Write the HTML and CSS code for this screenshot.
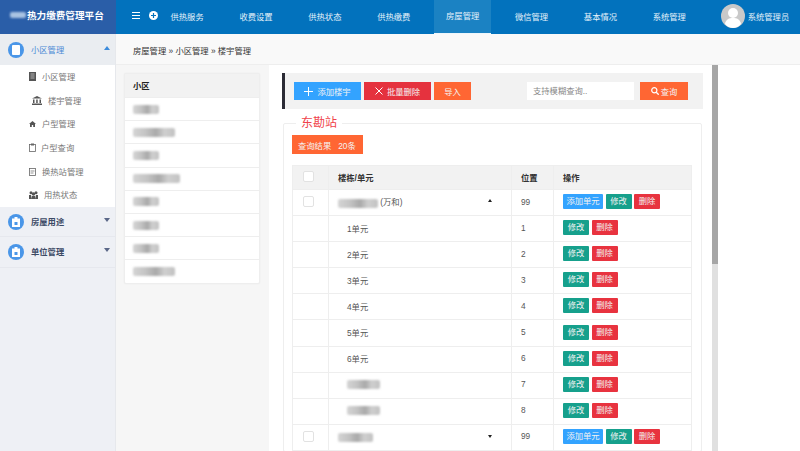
FILE: index.html
```html
<!DOCTYPE html>
<html lang="zh-CN">
<head>
    <meta charset="UTF-8">
    <title>热力缴费管理平台</title>
    <link rel="stylesheet" href="styles.css">
</head>
<body>
    <header class="topbar">
        <div class="logo"><span class="mask mask-logo"></span>热力缴费管理平台</div>
        <div class="tools">
            <svg width="8" height="7" viewBox="0 0 8 7"><path d="M0 .5h8M0 3.5h8M0 6.5h8" stroke="#fff" stroke-width="1.2"/></svg>
            <svg width="9" height="9" viewBox="0 0 9 9"><circle cx="4.500" cy="4.500" r="4.500" fill="#fff"/><path d="M4.500 2v5M2 4.500h5" stroke="#0272bd" stroke-width="1.2"/></svg>
        </div>
        <nav class="nav">
            <a>供热服务</a>
            <a>收费设置</a>
            <a>供热状态</a>
            <a>供热缴费</a>
            <a class="active">房屋管理</a>
            <a>微信管理</a>
            <a>基本情况</a>
            <a>系统管理</a>
        </nav>
        <div class="user">
            <svg width="24" height="24" viewBox="0 0 24 24"><circle cx="12" cy="12" r="12" fill="#c9c9c9"/><circle cx="12" cy="9" r="5" fill="#fff"/><path d="M4 20c1-5 4-6 8-6s7 1 8 6c-2 2.500-5 4-8 4s-6-1.500-8-4z" fill="#fff"/></svg>
            <span>系统管理员</span>
        </div>
    </header>

    <div class="layout">
        <aside class="sidebar">
            <div class="menu-head open">
                <span class="menu-icon"><svg width="8" height="10" viewBox="0 0 8 10"><rect width="8" height="10" rx="1" fill="#fff"/></svg></span>
                <span class="menu-text">小区管理</span>
                <i class="caret caret-up"></i>
            </div>
            <ul class="submenu">
                <li class="s1"><svg width="7" height="9" viewBox="0 0 7 9"><path d="M0 0h7v9H0z" fill="#555"/><path d="M1.500 2h4M1.500 4h4M1.500 6h4" stroke="#ddd" stroke-width=".7"/></svg><span>小区管理</span></li>
                <li class="s2"><svg width="10" height="9" viewBox="0 0 10 9"><path d="M5 0l5 2.500H0zM1 3.500h1.500V7H1zM4.200 3.500h1.500V7H4.200zM7.500 3.500H9V7H7.500zM0 7.500h10V9H0z" fill="#555"/></svg><span>楼宇管理</span></li>
                <li class="s1"><svg width="7" height="6" viewBox="0 0 7 6"><path d="M3.500 0L7 3H6v3H4.200V4H2.800v2H1V3H0z" fill="#555"/></svg><span>户型管理</span></li>
                <li class="s3"><svg width="7" height="9" viewBox="0 0 7 9" fill="none"><rect x=".5" y="1.500" width="6" height="7" stroke="#666" stroke-width=".8"/><path d="M2 .5h3v2H2z" fill="#666"/></svg><span>户型查询</span></li>
                <li class="s1"><svg width="7" height="8" viewBox="0 0 7 8" fill="none"><rect x=".5" y=".5" width="6" height="7" stroke="#666" stroke-width=".8"/><path d="M1.500 3h4M1.500 5h3" stroke="#666" stroke-width=".7"/></svg><span>换热站管理</span></li>
                <li class="s4"><svg width="9" height="8" viewBox="0 0 9 8"><circle cx="2" cy="1.800" r="1.500" fill="#555"/><circle cx="7" cy="1.800" r="1.500" fill="#555"/><circle cx="4.500" cy="3" r="1.700" fill="#555"/><path d="M0 4h2l1 4H0zM9 4H7L6 8h3zM3 5h3v3H3z" fill="#555"/></svg><span>用热状态</span></li>
            </ul>
            <div class="menu-head">
                <span class="menu-icon"><svg width="8" height="10" viewBox="0 0 8 10"><path d="M2.500 0h3v1.500H8V10H0V1.500h2.500z" fill="#fff"/><path d="M2.500 5h3v3h-3z" fill="#4a96e8"/></svg></span>
                <span class="menu-text">房屋用途</span>
                <i class="caret"></i>
            </div>
            <div class="menu-head">
                <span class="menu-icon"><svg width="8" height="10" viewBox="0 0 8 10"><path d="M2.500 0h3v1.500H8V10H0V1.500h2.500z" fill="#fff"/><path d="M2.500 5h3v3h-3z" fill="#4a96e8"/></svg></span>
                <span class="menu-text">单位管理</span>
                <i class="caret"></i>
            </div>
        </aside>

        <main class="content">
            <div class="crumbs">房屋管理 » 小区管理 » 楼宇管理</div>
            <div class="workspace">
                <section class="estates">
                    <div class="estates-head">小区</div>
                    <div class="estate"><span class="mask mask-sm"></span></div>
                    <div class="estate"><span class="mask mask-md"></span></div>
                    <div class="estate"><span class="mask mask-sm"></span></div>
                    <div class="estate"><span class="mask mask-lg"></span></div>
                    <div class="estate"><span class="mask mask-sm"></span></div>
                    <div class="estate"><span class="mask mask-sm"></span></div>
                    <div class="estate"><span class="mask mask-sm"></span></div>
                    <div class="estate"><span class="mask mask-md"></span></div>
                </section>

                <section class="panel">
                    <div class="toolbar">
                        <button class="btn btn-blue"><svg width="9" height="9" viewBox="0 0 9 9"><path d="M4.500 0v9M0 4.500h9" stroke="#fff" stroke-width="1"/></svg>添加楼宇</button>
                        <button class="btn btn-red"><svg width="8" height="8" viewBox="0 0 8 8"><path d="M.5.5l7 7M7.500.5l-7 7" stroke="#fff" stroke-width="1"/></svg>批量删除</button>
                        <button class="btn btn-orange btn-import">导入</button>
                        <input class="search" type="text" placeholder="支持模糊查询..">
                        <button class="btn btn-orange btn-search"><svg width="8" height="8" viewBox="0 0 8 8" fill="none"><circle cx="3.300" cy="3.300" r="2.600" stroke="#fff" stroke-width="1.200"/><path d="M5.200 5.200L7.700 7.700" stroke="#fff" stroke-width="1.300"/></svg>查询</button>
                    </div>

                    <fieldset class="station">
                        <legend>东勘站</legend>
                        <div class="result"><span>查询结果</span><span>20条</span></div>
                        <table class="grid">
                            <colgroup>
                                <col class="col-check"><col class="col-name"><col class="col-pos"><col>
                            </colgroup>
                            <thead>
                                <tr>
                                    <th><span class="check"></span></th>
                                    <th class="name">楼栋/单元</th>
                                    <th>位置</th>
                                    <th>操作</th>
                                </tr>
                            </thead>
                            <tbody>
                                <tr>
                                    <td><span class="check"></span></td>
                                    <td class="name"><span class="mask mask-name"></span> (万和)<i class="fold fold-up"></i></td>
                                    <td>99</td>
                                    <td class="ops"><a class="mini mini-blue">添加单元</a><a class="mini mini-green">修改</a><a class="mini mini-red">删除</a></td>
                                </tr>
                                <tr><td></td><td class="unit">1单元</td><td>1</td><td class="ops"><a class="mini mini-green">修改</a><a class="mini mini-red">删除</a></td></tr>
                                <tr><td></td><td class="unit">2单元</td><td>2</td><td class="ops"><a class="mini mini-green">修改</a><a class="mini mini-red">删除</a></td></tr>
                                <tr><td></td><td class="unit">3单元</td><td>3</td><td class="ops"><a class="mini mini-green">修改</a><a class="mini mini-red">删除</a></td></tr>
                                <tr><td></td><td class="unit">4单元</td><td>4</td><td class="ops"><a class="mini mini-green">修改</a><a class="mini mini-red">删除</a></td></tr>
                                <tr><td></td><td class="unit">5单元</td><td>5</td><td class="ops"><a class="mini mini-green">修改</a><a class="mini mini-red">删除</a></td></tr>
                                <tr><td></td><td class="unit">6单元</td><td>6</td><td class="ops"><a class="mini mini-green">修改</a><a class="mini mini-red">删除</a></td></tr>
                                <tr><td></td><td class="unit"><span class="mask mask-unit"></span></td><td>7</td><td class="ops"><a class="mini mini-green">修改</a><a class="mini mini-red">删除</a></td></tr>
                                <tr><td></td><td class="unit"><span class="mask mask-unit"></span></td><td>8</td><td class="ops"><a class="mini mini-green">修改</a><a class="mini mini-red">删除</a></td></tr>
                                <tr>
                                    <td><span class="check"></span></td>
                                    <td class="name"><span class="mask mask-name2"></span><i class="fold"></i></td>
                                    <td>99</td>
                                    <td class="ops"><a class="mini mini-blue">添加单元</a><a class="mini mini-green">修改</a><a class="mini mini-red">删除</a></td>
                                </tr>
                            </tbody>
                        </table>
                    </fieldset>
                </section>

                <div class="scrollbar"><div class="thumb"></div></div>
            </div>
        </main>
    </div>
</body>
</html>
```

FILE: styles.css
```css
* {
    box-sizing: border-box;
}

html, body {
    height: 100%;
}

body {
    margin: 0;
    overflow: hidden;
    font-family: "Liberation Sans", "Noto Sans CJK SC", sans-serif;
    font-size: 8.3px;
    color: #555;
    background: #fff;
}

ul {
    margin: 0;
    padding: 0;
    list-style: none;
}

/* blurred-out names */
.mask {
    display: inline-block;
    height: 9px;
    vertical-align: middle;
    border-radius: 2px;
    background: linear-gradient(90deg, #d4d4d4 0%, #c4c4c4 30%, #a9a9a9 55%, #cfcfcf 75%, #c2c2c2 100%);
    filter: blur(1px);
}

.mask-sm { width: 26px; }
.mask-md { width: 42px; }
.mask-lg { width: 47px; }
.mask-name { width: 40px; }
.mask-name2 { width: 35px; }
.mask-unit { width: 33px; }

.mask-logo {
    width: 16px;
    height: 6px;
    margin-right: 1px;
    background: #a9c3e2;
}

/* top bar */
.topbar {
    display: flex;
    height: 34px;
    background: #0272bd;
    color: #e4f1fa;
}

.logo {
    display: flex;
    align-items: center;
    flex: none;
    width: 116px;
    padding: 0 0 4px 10px;
    background: #2a5ea8;
    color: #fff;
    font-size: 9.6px;
    font-weight: bold;
    white-space: nowrap;
}

.tools {
    display: flex;
    align-items: center;
    flex: none;
    gap: 9px;
    width: 42.600px;
    padding: 0 0 4px 16px;
}

.tools svg {
    flex: none;
}

.nav {
    display: flex;
    flex: none;
}

.nav a {
    display: flex;
    align-items: center;
    justify-content: center;
    width: 57px;
    margin-right: 11.900px;
    padding-bottom: 3px;
}

.nav a.active {
    background: #1b82c3;
    border-bottom: 1px solid #eef6fb;
}

.user {
    display: flex;
    align-items: center;
    gap: 3px;
    margin-left: 11px;
    padding-bottom: 2px;
    white-space: nowrap;
}

/* left menu */
.layout {
    display: flex;
    height: 417px;
}

.sidebar {
    flex: none;
    width: 116px;
    background: #eef0f5;
    border-right: 1px solid #e6e8ec;
}

.menu-head {
    position: relative;
    display: flex;
    align-items: center;
    gap: 7px;
    height: 30.300px;
    padding-left: 8px;
    color: #3c4a66;
    font-weight: bold;
    border-bottom: 1px solid #e6e8ee;
}

.menu-text {
    padding-bottom: 2px;
}

.menu-head.open {
    height: 31px;
    background: #eaedf1;
    color: #4a8ad6;
    font-weight: normal;
    border-bottom: 0;
}

.menu-icon {
    display: flex;
    align-items: center;
    justify-content: center;
    width: 16px;
    height: 16px;
    border-radius: 50%;
    background: #4a96e8;
}

.caret {
    position: absolute;
    top: 11px;
    right: 5px;
    border-left: 3.500px solid transparent;
    border-right: 3.500px solid transparent;
    border-top: 4px solid #5a6788;
}

.caret-up {
    top: 12px;
    border-top: 0;
    border-bottom: 4px solid #3b8bdc;
}

.submenu {
    background: #fff;
    color: #777;
}

.submenu li {
    display: flex;
    align-items: center;
    height: 23.700px;
}

.submenu li span {
    padding-bottom: 2px;
}

.s1 { padding-left: 29px; gap: 6px; }
.s2 { padding-left: 32px; gap: 6px; }
.s3 { padding-left: 29px; gap: 5px; }
.s4 { padding-left: 29px; gap: 6px; }

/* main area */
.content {
    display: flex;
    flex: 1;
    flex-direction: column;
    min-width: 0;
}

.crumbs {
    display: flex;
    align-items: center;
    flex: none;
    height: 31px;
    padding: 2px 0 0 17px;
    background: #f9f9f9;
    border-bottom: 1px solid #eee;
    color: #333;
}

.workspace {
    display: flex;
    flex: 1;
    min-height: 0;
    background: #f6f6f6;
}

.estates {
    flex: none;
    align-self: flex-start;
    width: 136px;
    margin: 8px 9px 0 8px;
    background: #fff;
    border: 1px solid #eee;
    border-radius: 2px;
    box-shadow: 0 0 2px rgba(0, 0, 0, 0.05);
}

.estates-head {
    display: flex;
    align-items: center;
    height: 23px;
    padding: 0 0 2px 8px;
    background: #f2f2f2;
    color: #222;
    font-weight: bold;
}

.estate {
    display: flex;
    align-items: center;
    height: 23.200px;
    padding-left: 8px;
    border-top: 1px solid #eee;
}

.panel {
    flex: none;
    width: 443px;
    overflow: hidden;
    padding: 8px 9px 0 13px;
    background: #fff;
}

.toolbar {
    display: flex;
    align-items: center;
    height: 36px;
    padding-left: 9px;
    background: #f2f2f2;
    border-left: 3px solid #2b2b35;
}

.btn {
    display: flex;
    align-items: center;
    justify-content: center;
    gap: 4px;
    width: 67px;
    height: 18px;
    margin-right: 3px;
    padding: 0;
    border: 0;
    color: #f4f4f4;
    font: inherit;
}

.btn-blue { background: #33a3ff; }
.btn-red { background: #e5323e; }
.btn-orange { background: #ff6633; }

.btn-import {
    width: 37px;
    margin-right: 56px;
}

.btn-search {
    gap: 2px;
    width: 48px;
    margin-right: 0;
}

.search {
    width: 107px;
    height: 18px;
    margin-right: 6px;
    padding: 0 6px;
    background: #fff;
    border: 0;
    font: inherit;
    outline: 0;
}

.search::placeholder {
    color: #888;
}

.station {
    margin: 6px 1px 0;
    padding: 0 9px 0 8px;
    border: 1px solid #eee;
    border-radius: 2px;
}

.station legend {
    margin-left: 4px;
    padding: 0 5px;
    color: #f0434b;
    font-size: 12px;
    line-height: 16px;
}

.result {
    display: flex;
    align-items: center;
    gap: 7px;
    width: 71px;
    height: 19px;
    margin-top: 4px;
    padding-left: 6px;
    background: #ff6633;
    color: #f4f4f4;
    white-space: nowrap;
}

.grid {
    width: 400px;
    margin-top: 11px;
    border-collapse: collapse;
    table-layout: fixed;
}

.col-check { width: 36px; }
.col-name { width: 183px; }
.col-pos { width: 42px; }

.grid th,
.grid td {
    height: 26.100px;
    padding: 0 0 2px 9px;
    border: 1px solid #eee;
    text-align: left;
}

.grid th {
    height: 24px;
    background: #f2f2f2;
    color: #333;
    font-weight: bold;
}

.grid .name,
.grid .unit {
    position: relative;
    white-space: nowrap;
}

.grid .unit {
    padding-left: 18px;
}

.check {
    display: block;
    width: 11px;
    height: 11px;
    margin-left: 1px;
    background: #fff;
    border: 1px solid #e2e2e2;
    border-radius: 2px;
}

.fold {
    position: absolute;
    top: 10px;
    right: 19px;
    border-left: 2.500px solid transparent;
    border-right: 2.500px solid transparent;
    border-top: 3px solid #222;
}

.fold-up {
    top: 9px;
    border-top: 0;
    border-bottom: 3px solid #222;
}

.mini {
    display: inline-block;
    width: 26px;
    height: 15px;
    margin-right: 2.500px;
    border-radius: 1px;
    color: #f2f2f2;
    line-height: 15px;
    text-align: center;
    vertical-align: middle;
}

.mini-blue { width: 40px; background: #33a3ff; }
.mini-green { background: #16a08c; }
.mini-red { background: #e8333f; }

.scrollbar {
    flex: none;
    width: 6px;
    background: #e0e0e0;
}

.thumb {
    height: 199px;
    background: #a6a6a6;
}

/* right of the scrollbar the page stays white */
.workspace::after {
    content: "";
    flex: 1;
    background: #fff;
}
```
